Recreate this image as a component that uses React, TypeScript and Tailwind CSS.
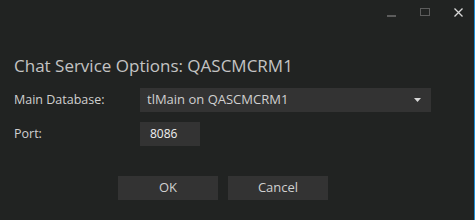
export default function App() {
  return (
    <div
      className="relative w-[475px] h-[220px] bg-[#212322] border-r border-[#1e8fd6] overflow-hidden text-[#d0d0d0]"
      style={{ fontFamily: "'Open Sans', 'Noto Sans', sans-serif" }}
    >
      <div className="flex justify-end items-center h-[26px] pr-[11px] gap-[24px]">
        <div className="w-[9px] h-[2px] bg-[#5c5c5c] mt-[6px]" />
        <div className="w-[10px] h-[8px] border border-[#5c5c5c] mb-[2px]" />
        <svg width="9" height="9" viewBox="0 0 9 9" className="mb-[1px]">
          <path d="M0.5 0.5 L8.5 8.5 M8.5 0.5 L0.5 8.5" stroke="#d8d8d8" strokeWidth="1.3" />
        </svg>
      </div>

      <div className="pl-[14px] pr-[43px] pt-[28px]">
        <h1 className="text-[17px] leading-[24px] text-[#c4c4c4]">Chat Service Options: QASCMCRM1</h1>

        <div className="mt-[10px] flex items-center h-[24px]">
          <div className="w-[126px] text-[12.5px]">Main Database:</div>
          <div className="flex-1 h-[24px] bg-[#333333] flex items-center justify-between pl-[7px] pr-[10px] text-[13px]">
            <span>tlMain on QASCMCRM1</span>
            <svg width="7" height="4" viewBox="0 0 7 4">
              <path d="M0 0 L7 0 L3.5 4 Z" fill="#d8d8d8" />
            </svg>
          </div>
        </div>

        <div className="mt-[10px] flex items-center h-[24px]">
          <div className="w-[126px] text-[12.5px]">Port:</div>
          <div className="w-[60px] h-[24px] bg-[#333333] flex items-center pl-[10px] text-[12px] text-[#f0f0f0]">8086</div>
        </div>
      </div>

      <div className="flex justify-start gap-[10px] pl-[118px] mt-[30px]">
        <button className="w-[100px] h-[24px] bg-[#333333] text-[13px] text-[#d0d0d0]">OK</button>
        <button className="w-[100px] h-[24px] bg-[#333333] text-[13px] text-[#d0d0d0]">Cancel</button>
      </div>
    </div>
  );
}
